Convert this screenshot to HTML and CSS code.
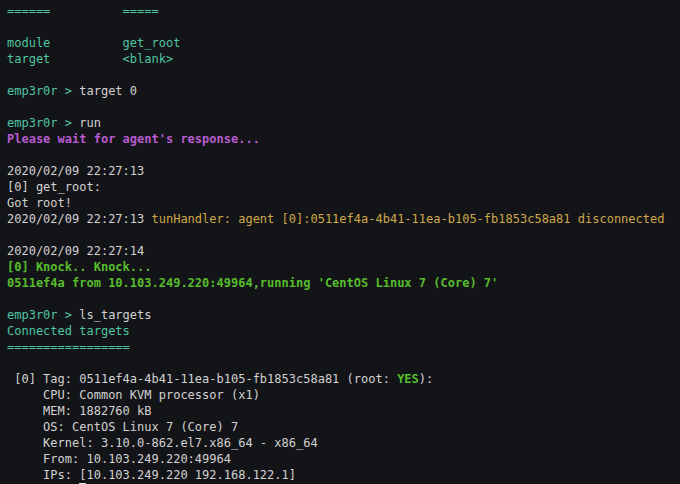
FILE: index.html
```html
<!DOCTYPE html>
<html>
<head>
<meta charset="utf-8">
<link rel="stylesheet" href="styles.css">
</head>
<body>
<pre class="term"><span class="c">======          =====</span>

<span class="c">module          get_root</span>
<span class="c">target          &lt;blank&gt;</span>

<span class="c">emp3r0r &gt; </span>target 0

<span class="c">emp3r0r &gt; </span>run
<span class="m">Please wait for agent's response...</span>

2020/02/09 22:27:13
[0] get_root:
Got root!
2020/02/09 22:27:13 <span class="y">tunHandler: agent [0]:0511ef4a-4b41-11ea-b105-fb1853c58a81 disconnected</span>

2020/02/09 22:27:14
<span class="g">[0] Knock.. Knock...</span>
<span class="g">0511ef4a from 10.103.249.220:49964,running 'CentOS Linux 7 (Core) 7'</span>

<span class="c">emp3r0r &gt; </span>ls_targets
<span class="c">Connected targets</span>
<span class="c">=================</span>

 [0] Tag: 0511ef4a-4b41-11ea-b105-fb1853c58a81 (root: <span class="g">YES</span>):
     CPU: Common KVM processor (x1)
     MEM: 1882760 kB
     OS: CentOS Linux 7 (Core) 7
     Kernel: 3.10.0-862.el7.x86_64 - x86_64
     From: 10.103.249.220:49964
     IPs: [10.103.249.220 192.168.122.1]
          <span class="cursor"> </span></pre>
</body>
</html>
```
FILE: styles.css
```css
html, body {
  margin: 0;
  padding: 0;
  background: #131417;
  overflow: hidden;
  height: 484px;
}
.term {
  margin: 0;
  padding: 3px 0 0 7px;
  font-family: "DejaVu Sans Mono", monospace;
  font-size: 12px;
  line-height: 16px;
  color: #d2d2d2;
  white-space: pre;
}
.c { color: #4fc5a2; }
.m { color: #b85ad0; font-weight: bold; }
.y { color: #cfa84a; }
.g { color: #57bd2c; font-weight: bold; }
.cursor {
  display: inline-block;
  width: 7px;
  height: 16px;
  background: #e8e8e8;
  vertical-align: top;
}
```
